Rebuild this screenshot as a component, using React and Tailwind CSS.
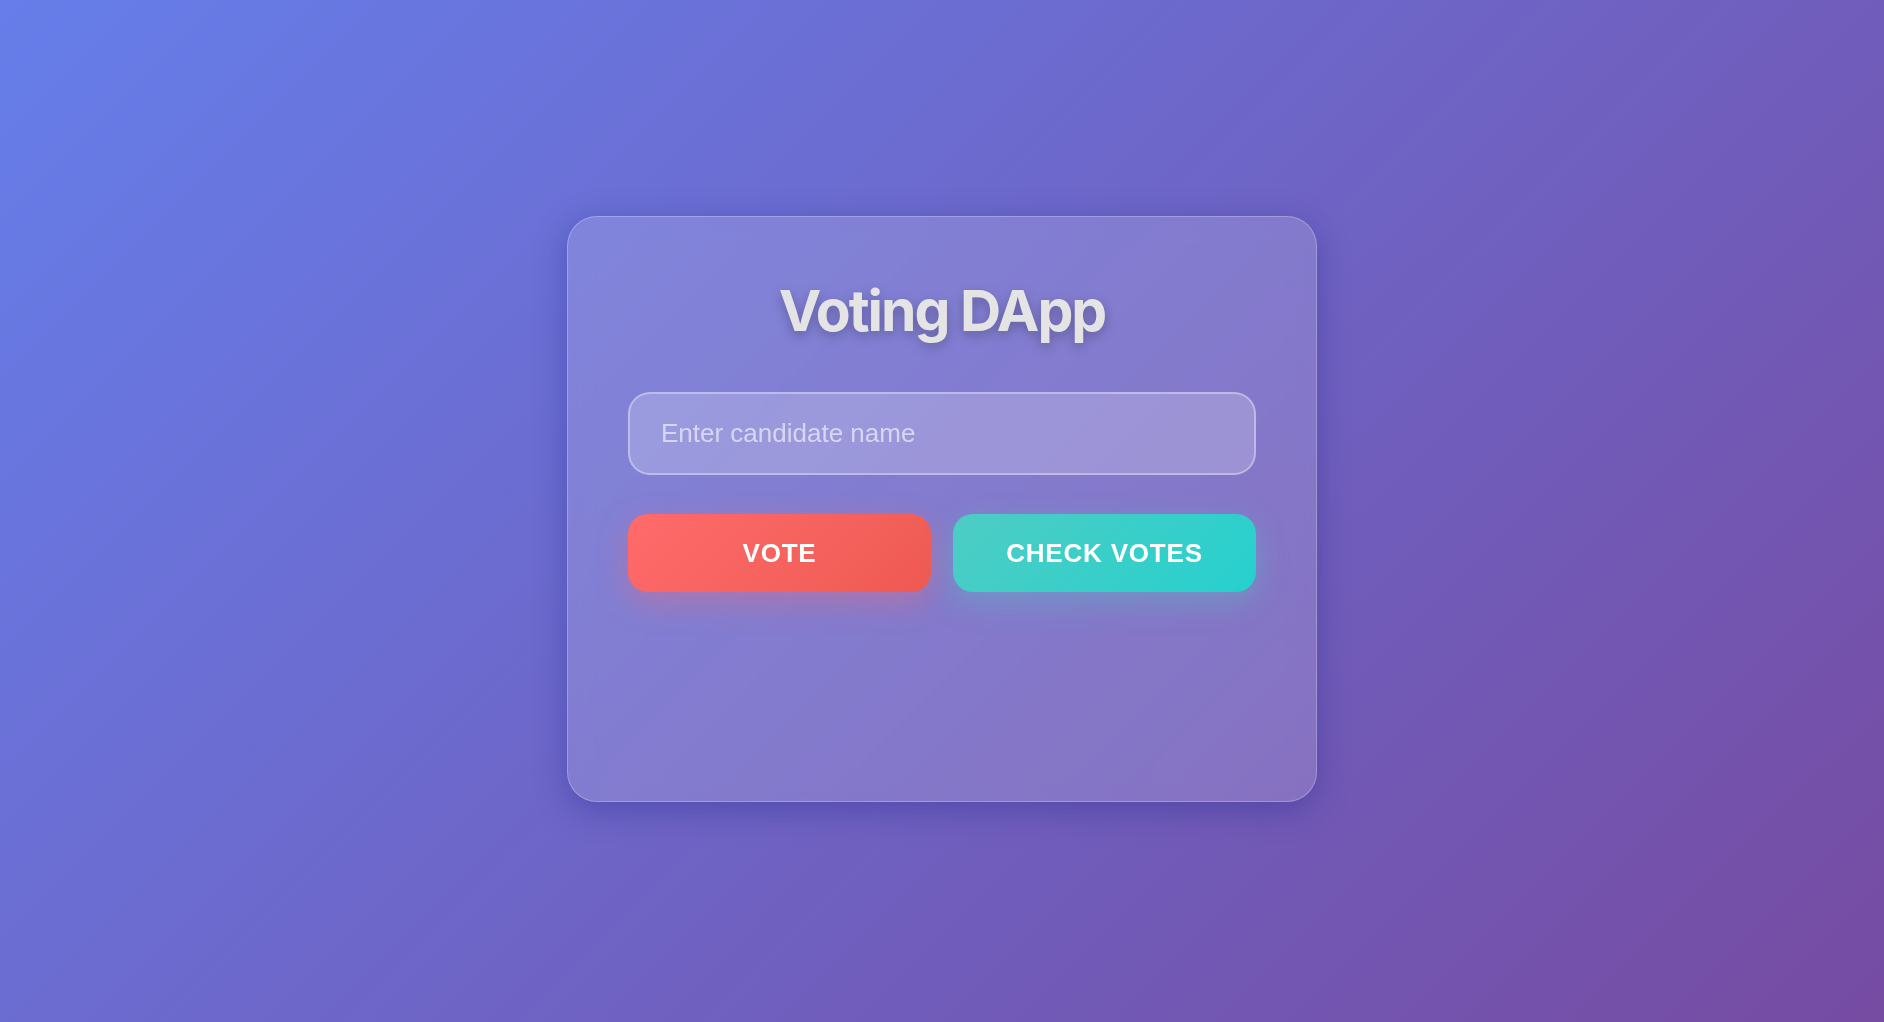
import { useState } from 'react';

export default function App() {
  const [name, setName] = useState('');

  return (
    <div className="min-h-screen flex items-center justify-center pb-[4px] bg-[linear-gradient(135deg,#667eea_0%,#764ba2_100%)] font-['Liberation_Sans',Arial,sans-serif]">
      <div className="w-[750px] p-[60px] rounded-[30px] bg-white/15 border border-white/25 backdrop-blur-md shadow-[0_8px_32px_rgba(31,38,135,0.37)]">
        <h1 className="text-center text-[57px] leading-[1.2] font-bold tracking-[-0.035em] text-[#e4e4e4] font-['Inter',sans-serif] [text-shadow:0_4px_12px_rgba(0,0,0,0.25)] mb-[47px]">
          Voting DApp
        </h1>

        <input
          type="text"
          value={name}
          onChange={(e) => setName(e.target.value)}
          placeholder="Enter candidate name"
          className="block w-full h-[83px] px-[31px] rounded-[22px] bg-white/20 border-2 border-white/35 text-[26px] text-white placeholder:text-white/60 outline-none"
        />

        <div className="flex gap-[22px] mt-[39px]">
          <button className="flex-1 h-[78px] rounded-[20px] bg-[linear-gradient(135deg,#ff6b6b,#ee5a52)] text-white text-[26px] font-bold tracking-[0.8px] shadow-[0_10px_30px_rgba(255,107,107,0.35)]">
            VOTE
          </button>
          <button className="flex-1 h-[78px] rounded-[20px] bg-[linear-gradient(135deg,#4ecdc4,#26d0ce)] text-white text-[26px] font-bold tracking-[0.8px] shadow-[0_10px_30px_rgba(78,205,196,0.35)]">
            CHECK VOTES
          </button>
        </div>

        <div className="h-[149px]"></div>
      </div>
    </div>
  );
}
